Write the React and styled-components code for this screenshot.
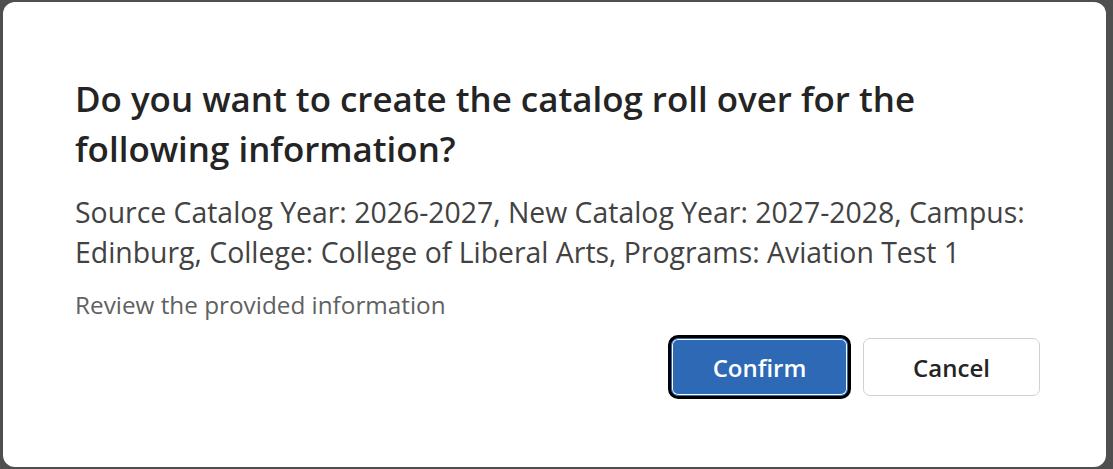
import styled, { createGlobalStyle } from "styled-components"

const GlobalStyle = createGlobalStyle`
  html, body {
    margin: 0;
    padding: 0;
    height: 100%;
  }
  body {
    font-family: "Open Sans", "Noto Sans", sans-serif;
    background: #4f4f4f;
  }
  #root {
    height: 100%;
  }
`

export default function App () {
  return (
    <>
      <GlobalStyle/>
      <Backdrop>
        <Dialog role="dialog" aria-modal="true">
          <Title>Do you want to create the catalog roll over for the following information?</Title>
          <Content>
            <Body>
              Source Catalog Year: 2026-2027, New Catalog Year: 2027-2028, Campus: Edinburg, College: College of Liberal Arts, Programs: Aviation Test 1
            </Body>
            <Hint>Review the provided information</Hint>
          </Content>
          <Actions>
            <Button primary autoFocus>Confirm</Button>
            <Button>Cancel</Button>
          </Actions>
        </Dialog>
      </Backdrop>
    </>
  )
}

const Backdrop = styled.div`
  height: 100%;
  box-sizing: border-box;
  padding: 2px 7px 2px 3px;
  display: flex;
`
const Dialog = styled.div`
  flex: 1;
  background: #ffffff;
  border-radius: 12px;
  padding: 72px 66px 71px 72px;
  box-sizing: border-box;
  display: flex;
  flex-direction: column;
`
const Title = styled.h2`
  margin: 0;
  font-size: 34.9px;
  line-height: 50px;
  font-weight: 600;
  color: #242424;
`
const Content = styled.div`
  margin-top: 18px;
  display: flex;
  flex-direction: column;
  gap: 16px;
`
const Body = styled.p`
  margin: 0;
  font-size: 28.4px;
  line-height: 40px;
  color: #424242;
`
const Hint = styled.p`
  margin: 0;
  font-size: 24.3px;
  line-height: 34px;
  color: #616161;
`
const Actions = styled.div`
  margin-top: 16px;
  display: flex;
  justify-content: flex-end;
  gap: 15px;
`
const Button = styled.button`
  width: 177px;
  height: 58px;
  box-sizing: border-box;
  border-radius: 7px;
  font-family: inherit;
  font-size: 24px;
  font-weight: 600;
  cursor: pointer;
  border: 1px solid ${p => p.primary ? "#2d69b5" : "#d1d1d1"};
  background: ${p => p.primary ? "#2d69b5" : "#ffffff"};
  color: ${p => p.primary ? "#ffffff" : "#242424"};
  box-shadow: ${p => p.primary ? "inset 0 0 0 1px #ffffff, 0 0 0 3px #000000" : "none"};
  outline: none;
`
